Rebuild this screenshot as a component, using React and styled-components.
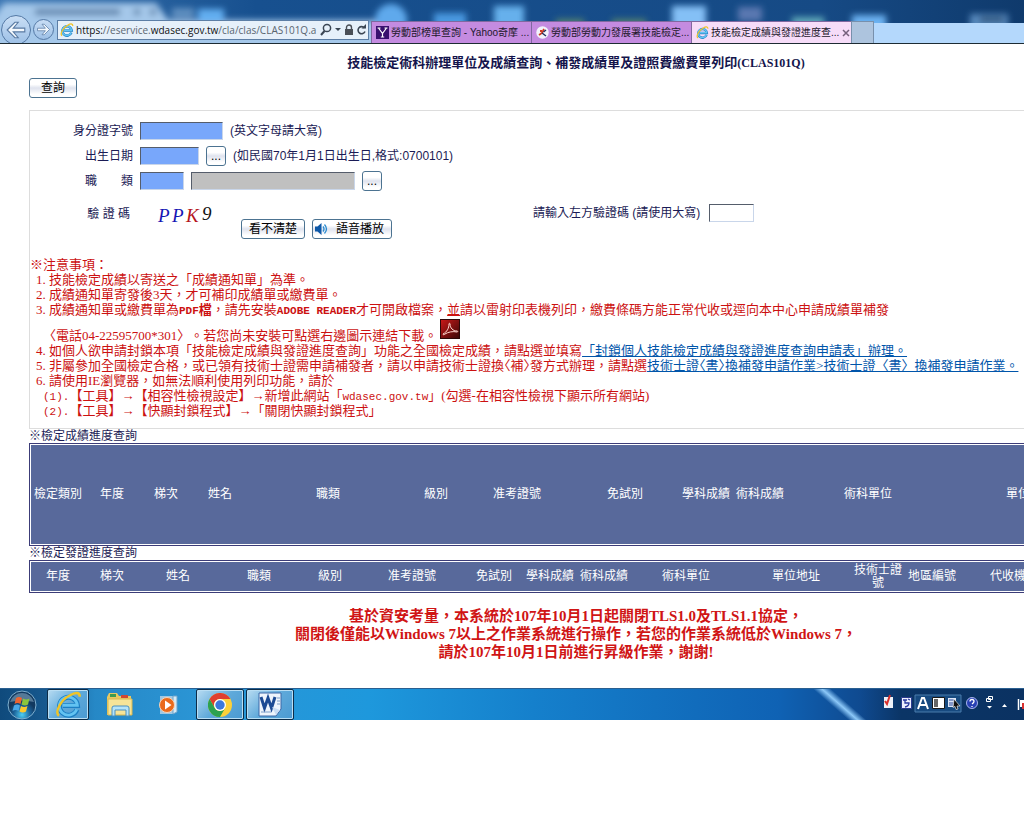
import React from 'react';
import styled, { createGlobalStyle } from 'styled-components';

const GlobalStyle = createGlobalStyle`
  * {
    box-sizing: border-box;
  }
  body {
    margin: 0;
    background: #fff;
    color: #1b1b55;
    font: 12px/14px "Liberation Sans", "Noto Sans CJK TC", sans-serif;
  }
`;

const Screen = styled.div`
  overflow: hidden;
`;

/* browser chrome */

const BrowserBar = styled.header`
  position: relative;
  display: flex;
  align-items: flex-end;
  height: 44px;
  background: #17508f;
  border-bottom: 1px solid #1d2b33;
  overflow: hidden;
`;

const Backdrop = styled.svg`
  position: absolute;
  top: 0;
  left: 0;
  width: 100%;
  height: 43px;
`;

const NavArea = styled.div`
  position: relative;
  display: flex;
  align-items: center;
  flex: none;
  width: 371px;
  height: 27px;
`;

const NavButton = styled.button`
  flex: none;
  width: ${(p) => p.$size}px;
  height: ${(p) => p.$size}px;
  margin: 0 ${(p) => p.$gap}px 0 1px;
  padding: 0;
  border: 1px solid #5579a5;
  border-radius: 50%;
  background: linear-gradient(#c9def5, #9dc0e6);
  line-height: 0;
`;

const AddressBar = styled.div`
  display: flex;
  align-items: center;
  flex: 1;
  gap: 2px;
  min-width: 0;
  height: 20px;
  margin-right: 2px;
  padding: 0 1px 0 2px;
  border: 1px solid #5c7ea6;
  background: #e6f0fa;
  font: 10px/16px "Open Sans", "Noto Sans", sans-serif;
  color: #5a6570;
  svg {
    flex: none;
  }
`;

const Url = styled.span`
  flex: 1;
  min-width: 0;
  white-space: nowrap;
  b {
    color: #111;
    font-weight: 400;
  }
`;

const Tab = styled.a`
  position: relative;
  display: flex;
  align-items: center;
  flex: none;
  gap: 2px;
  width: 160px;
  height: 22px;
  padding: 0 1px 0 4px;
  border: 1px solid #8068a0;
  border-width: 1px 0 0 1px;
  background: ${(p) => (p.$active ? '#f6dcf8' : '#c48be0')};
  color: #22182c;
  font: 10px/14px "Liberation Sans", "Noto Sans CJK TC", sans-serif;
  text-decoration: none;
  white-space: nowrap;
  svg {
    flex: none;
  }
`;

const TabText = styled.span`
  flex: 1;
  min-width: 0;
`;

const NewTab = styled.button`
  position: relative;
  width: 23px;
  height: 22px;
  padding: 0;
  border: 1px solid #7890ac;
  border-bottom: 0;
  background: #adc4de;
`;

/* page */

const Page = styled.main`
  min-width: 1094px;
  margin-left: 29px;
`;

const Title = styled.h1`
  margin: 0;
  padding: 10px 0 6px;
  font: bold 13px/18px "Liberation Serif", "Noto Sans CJK TC", sans-serif;
  color: #14144c;
  text-align: center;
`;

const TitleCode = styled.span`
  font-size: 12px;
`;

const PushButton = styled.button`
  display: inline-flex;
  align-items: center;
  justify-content: center;
  gap: 2px;
  height: 20px;
  padding: 0 ${(p) => p.$pad}px;
  border: 1px solid #4c7391;
  border-radius: 3px;
  background: linear-gradient(#fff 30%, #dfe3ee 50%, #fff 85%);
  color: #000;
  font: 12px/16px "Liberation Sans", "Noto Sans CJK TC", sans-serif;
`;

const QueryForm = styled.form`
  margin-top: 12px;
  padding-top: 7px;
  border: 1px solid #ddd;
`;

const FieldRow = styled.div`
  display: flex;
  align-items: center;
  gap: 7px;
  height: 25px;
`;

const FieldLabel = styled.label`
  width: 103px;
  text-align: right;
  white-space: pre;
`;

const TextBox = styled.input`
  width: ${(p) => p.$width}px;
  height: 18px;
  padding: 0 2px;
  border: 1px solid;
  border-color: #555d6b #c9d6ea #c9d6ea #555d6b;
  background: ${(p) => p.$fill || '#78a7fb'};
`;

const CaptchaRow = styled(FieldRow)`
  align-items: flex-start;
  height: 64px;
  padding-top: 11px;
`;

const CaptchaLabel = styled(FieldLabel)`
  width: 100px;
  padding-top: 3px;
`;

const Captcha = styled.svg`
  width: 60px;
  height: 22px;
  margin: 0 17px 0 20px;
  font: italic 19px "Liberation Serif", serif;
`;

const ButtonGroup = styled.div`
  display: flex;
  gap: 7px;
  margin-top: 15px;
`;

const CaptchaEntry = styled.div`
  display: flex;
  align-items: center;
  gap: 9px;
  margin-left: 134px;
`;

const Notes = styled.section`
  padding-bottom: 10px;
  color: #cc1111;
  font: 13px/15px "Liberation Serif", "Noto Sans CJK TC", sans-serif;
  text-spacing-trim: space-all;
  white-space: nowrap;
`;

const NoteLine = styled.p`
  margin: 0 0 0 ${(p) => p.$indent || 0}px;
`;

const Marker = styled.span`
  display: inline-block;
  width: 13px;
`;

const IconLine = styled(NoteLine)`
  display: flex;
  align-items: flex-end;
  gap: 3px;
  height: 26px;
  a {
    height: 24px;
  }
`;

const Mono = styled.span`
  font-family: "Liberation Mono", monospace;
  font-size: 11px;
  line-height: 10px;
  white-space: pre;
`;

// half-width brackets
const Compact = styled.span`
  font-feature-settings: "halt";
`;

const DocLink = styled.a`
  color: #0055aa;
`;

const Caption = styled.h2`
  margin: 0;
  font: 12px/14px "Liberation Sans", "Noto Sans CJK TC", sans-serif;
`;

const ResultTable = styled.table`
  table-layout: fixed;
  width: ${(p) => p.$width}px;
  height: ${(p) => p.$height}px;
  padding: 1px;
  border: 1px solid #3c3c78;
  border-spacing: 0;
  th {
    padding: 0 3px;
    background: #58699b;
    color: #fff;
    font-weight: 400;
    line-height: 13px;
  }
`;

const Notice = styled.p`
  margin: 14px 0 27px;
  color: #d01515;
  font: bold 15px/18px "Liberation Serif", "Noto Sans CJK TC", sans-serif;
  text-align: center;
`;

/* windows taskbar */

const TaskBar = styled.footer`
  position: relative;
  display: flex;
  align-items: center;
  height: 32px;
  border-top: 1px solid #2a5f90;
  background: linear-gradient(90deg, #0f4a7c 0, #16588e 45px, #2688c6 95px, #2b96d6 20%, #1e98dc 36%, #1580cc 52%, #0f62b4 76%, #0f4a90 84%, #0b3566 88%, #0b3262);
  overflow: hidden;
`;

const Streak = styled.span`
  position: absolute;
  top: -20px;
  right: 173px;
  width: 12px;
  height: 80px;
  background: linear-gradient(90deg, #5fb0f000, #8cc8f8, #5fb0f000);
  transform: rotate(-49deg);
`;

const TaskButton = styled.button`
  display: flex;
  align-items: center;
  justify-content: center;
  width: ${(p) => p.$width}px;
  height: 31px;
  margin-right: ${(p) => p.$gap || 0}px;
  padding: 0;
  border: 1px solid ${(p) => (p.$open ? '#0c2c48' : 'transparent')};
  border-radius: 2px;
  background: ${(p) => (p.$open ? 'linear-gradient(135deg, #b8dcf2, #5fa9da 50%, #4a9ad2)' : 'none')};
  box-shadow: ${(p) => (p.$open ? 'inset 0 0 0 1px #b9def4' : 'none')};
`;

const Tray = styled.div`
  display: flex;
  align-items: center;
  margin-left: auto;
  padding-bottom: 3px;
`;

const IeIcon = ({ size }) => (
  <svg width={size} height={size} viewBox="0 0 24 24" fill="none">
    <path d="M19.5 16.5A8 8 0 1 1 20 12.8H7" stroke="#1c7fc4" strokeWidth="4.4" />
    <path d="M19.3 16.3A8 8 0 1 1 19.8 12.6H7" stroke="#63c3f2" strokeWidth="2.600" />
    <path d="M3.5 22C-.5 19 5 8 13 4c5-3 9-3.500 9 1" stroke="#f0c428" strokeWidth="2.200" />
  </svg>
);

const ArrowIcon = ({ size, flip }) => (
  <svg width={size} height={size} viewBox="0 0 20 20">
    <path
      d="M2 10l7-7h3L7.500 8.300H18v3.400H7.500L12 17H9z"
      transform={flip ? 'rotate(180 10 10)' : undefined}
      fill="#f3f8fd"
      stroke="#5a7ba3"
      strokeWidth="1"
    />
  </svg>
);

const SearchIcon = () => (
  <svg width="12" height="14" viewBox="0 0 12 14" fill="none" stroke="#3b4654" strokeWidth="1.500">
    <circle cx="7" cy="5" r="3.600" />
    <path d="M4.500 8L1 12" strokeWidth="2" />
  </svg>
);

const LockIcon = () => (
  <svg width="10" height="12" viewBox="0 0 10 12">
    <rect x="1" y="5" width="8" height="6" fill="#4a4f57" />
    <path d="M2.500 5V3.500a2.500 2.500 0 0 1 5 0V5" fill="none" stroke="#4a4f57" strokeWidth="1.400" />
  </svg>
);

const ReloadIcon = () => (
  <svg width="11" height="12" viewBox="0 0 11 12">
    <path d="M8.500 4A3.600 3.600 0 1 0 9 7.500" fill="none" stroke="#3b4654" strokeWidth="1.600" />
    <path d="M5.500 4.500H10V0z" fill="#3b4654" />
  </svg>
);

const YahooIcon = () => (
  <svg width="13" height="13" viewBox="0 0 13 13">
    <rect width="13" height="13" fill="#38106e" />
    <path d="M2.500 2l4 5.500L10.500 2M6.500 7v4M4.800 11h3.400M1.500 2h3M8.500 2h3" fill="none" stroke="#fff" strokeWidth="1.200" />
  </svg>
);

const AgencyIcon = () => (
  <svg width="13" height="13" viewBox="0 0 13 13">
    <circle cx="6.500" cy="6.500" r="6.200" fill="#f2f2fa" />
    <path d="M3 9l3-2 2-4M4 5h2" fill="none" stroke="#d03a20" strokeWidth="1.800" />
    <path d="M6 7l4 3M7.500 6L10 4" stroke="#23305e" strokeWidth="1.500" />
  </svg>
);

const SpeakerIcon = () => (
  <svg width="14" height="14" viewBox="0 0 14 14">
    <path d="M1 4.500h2.500L7.500 1v12L3.500 9.500H1z" fill="#0d58a8" />
    <path d="M9 4.500q2 2.500 0 5M10.500 2.500q4 4.500 0 9" fill="none" stroke="#2a8bd0" strokeWidth="1.300" />
  </svg>
);

const PdfIcon = () => (
  <svg width="20" height="20" viewBox="0 0 20 20">
    <defs>
      <linearGradient id="pdf" x2="1" y2="1">
        <stop offset="0" stopColor="#c81818" />
        <stop offset="1" stopColor="#3c0808" />
      </linearGradient>
    </defs>
    <rect width="20" height="20" fill="#2c0808" />
    <rect x="1" y="1" width="18" height="18" fill="url(#pdf)" />
    <path d="M3 15c4-2 6-6 6-10 0-1 1-1 1 0 0 4 3 7 7 7 1 0 1 1 0 1-4-1-9 0-12 2-1 1-2 1-2 0z" fill="none" stroke="#ffd8d0" />
  </svg>
);

const StartIcon = () => (
  <svg width="30" height="30" viewBox="0 0 30 30">
    <defs>
      <radialGradient id="orb" cy=".85">
        <stop offset="0" stopColor="#4ed0f4" />
        <stop offset=".6" stopColor="#1a6098" />
        <stop offset="1" stopColor="#12395f" />
      </radialGradient>
    </defs>
    <circle cx="15" cy="15" r="14" fill="url(#orb)" stroke="#7fb0d0" />
    <path d="M3 12a12.500 12.500 0 0 1 24 0q-12-3-24 0z" fill="#a8c8dc" opacity=".45" />
    <path d="M9 8q3-2 6 0l-1.500 6q-3-2-6 0z" fill="#ee6430" />
    <path d="M16 8.500q3 2 6.500 0L21 14.500q-3 2-6.500 0z" fill="#8cc63c" />
    <path d="M7 15.500q3-2 6 0L11.500 21q-3-2-6 0z" fill="#4aa8e8" />
    <path d="M14 16q3 2 6.500 0L19 21.500q-3 2-6.500 0z" fill="#fcc82c" />
  </svg>
);

const FolderIcon = () => (
  <svg width="28" height="26" viewBox="0 0 28 26">
    <path d="M1 5l2-4h8l2 3h12v19H1z" fill="#e8c860" />
    <path d="M4 2h6v3H4z" fill="#3c9a50" />
    <path d="M15 3h7v3h-7z" fill="#d04830" />
    <path d="M2 7h24v16H2z" fill="#f6e498" stroke="#d8b850" />
    <path d="M6 24v-8q0-2 2-2h13q2 0 2 2v8h-3v-6H9v6z" fill="#b4e4fa" stroke="#4a90c0" />
  </svg>
);

const MediaIcon = () => (
  <svg width="24" height="20" viewBox="0 0 24 20">
    <path d="M2 1h13v18H2z" fill="#9fc8e4" />
    <path d="M15 1h4v16l-4 2z" fill="#d6eaf6" stroke="#6ba4cc" />
    <circle cx="9" cy="10" r="7.500" fill="#ea6a1c" stroke="#f8d4b8" />
    <path d="M7 5.500l6.500 4.500L7 14.500z" fill="#fff" />
  </svg>
);

const ChromeIcon = () => (
  <svg width="24" height="24" viewBox="0 0 24 24">
    <circle cx="12" cy="12" r="12" fill="#fcd03a" />
    <path d="M1.600 6A12 12 0 0 1 22.400 6H12a6 6 0 0 0-5.200 9z" fill="#df3e30" />
    <path d="M1.600 6A12 12 0 0 0 12 24l5.200-9A6 6 0 0 1 6.800 15z" fill="#2da150" />
    <circle cx="12" cy="12" r="6" fill="#fff" />
    <circle cx="12" cy="12" r="4.700" fill="#3c78dc" />
  </svg>
);

const WordIcon = () => (
  <svg width="26" height="25" viewBox="0 0 26 25">
    <path d="M2 1h22v16l-5 7H2z" fill="#eef4fc" stroke="#3c68a8" />
    <path d="M4 5l3.500 11L11 6l3.500 10L18 5" fill="none" stroke="#1c4a94" strokeWidth="3" />
    <path d="M4 20h10M20 6h3M20 9h3M20 12h3" stroke="#7a9cc8" />
    <path d="M15 15l8 3-4 5z" fill="#c8dcf4" />
  </svg>
);

const TrayIcons = () => (
  <svg width="141" height="22" viewBox="0 0 141 22" fill="none">
    <path d="M1 5h9v11H1z" fill="#eef2f8" />
    <path d="M2 9l2 3 3-9" stroke="#d8302c" strokeWidth="2" />
    <path d="M18.500 5.500h10v11h-10z" fill="#eef0ff" stroke="#2c3c90" />
    <path d="M20 8h4M22 8v3h4q0 3-4 4M25 7l2 1" stroke="#2838a0" strokeWidth="1.300" />
    <path d="M32 3h46v17H32z" fill="#174a80" stroke="#4a7cac" />
    <path d="M35 17l4-11h2l4 11M37 13h6" stroke="#fff" strokeWidth="2" />
    <path d="M49.500 5.500h12v11h-12z" fill="#fff" stroke="#181818" />
    <path d="M51 7h4v8h-4z" fill="#666" />
    <path d="M65 6h8v9h-8z" fill="#dce6f8" />
    <path d="M66 8h5M66 11h6M66 13h4" stroke="#2c4898" />
    <path d="M71 7l6 7h-3l1 3-2 .5-1-3-2 1z" fill="#111" stroke="#fff" strokeWidth=".6" />
    <circle cx="89" cy="11" r="5.500" fill="#2840b4" stroke="#a8b4ec" />
    <path d="M87 9.500q0-2 2-2t2 2q0 1-2 2.500M89 14v1" stroke="#fff" strokeWidth="1.300" />
    <path d="M105.500 4.500h4v3h-4zM103.500 6.500h4v3h-4z" stroke="#fff" />
    <path d="M104 14h5l-2.500 2.500zM119 15h5l-2.500-3z" fill="#fff" />
    <path d="M135.500 7v11" stroke="#fff" strokeWidth="1.500" />
    <path d="M137 8h4v7h-4z" fill="#fff" />
    <path d="M139 11h2v6h-2z" fill="#d83030" />
  </svg>
);

// blurred desktop showing through the glass title bar
const GlassBackdrop = () => (
  <Backdrop viewBox="0 0 1024 43" preserveAspectRatio="none" aria-hidden="true">
    <defs>
      <filter id="soft" x="-20%" y="-60%" width="140%" height="220%">
        <feGaussianBlur stdDeviation="3" />
      </filter>
      <linearGradient id="sky">
        <stop offset="0" stopColor="#3d77b3" />
        <stop offset=".25" stopColor="#17508f" />
        <stop offset=".8" stopColor="#164a85" />
        <stop offset="1" stopColor="#0f3a6c" />
      </linearGradient>
    </defs>
    <rect width="1024" height="43" fill="url(#sky)" />
    <g filter="url(#soft)">
      <path d="M-10 22L4 3h152l12 17h210v30H-10z" fill="#a5c8ea" />
      <path d="M35 9h85v6H35zM134 9h6v6h-6zM150 9h6v6h-6z" fill="#587fa8" />
      <path d="M172 8h22v10h-22z" fill="#5f8fc0" />
      <rect x="198" y="9" width="26" height="14" fill="#62aef0" />
      <circle cx="391" cy="20" r="16" fill="#5ea9ec" />
      <rect x="434" y="13" width="32" height="20" fill="#4a98e0" />
      <rect x="494" y="6" width="30" height="26" fill="#66b0ec" />
      <path d="M556 19h28v10h-28zM612 19h34v10h-34z" fill="#52806f" />
      <rect x="672" y="6" width="34" height="24" fill="#84c0f6" />
      <rect x="738" y="7" width="24" height="14" fill="#5a78b0" />
      <rect x="792" y="17" width="32" height="10" fill="#5fa8b8" />
      <rect x="852" y="15" width="34" height="20" fill="#6cb2f2" />
      <rect x="970" y="14" width="38" height="20" fill="#5688bc" />
      <rect x="980" y="17" width="24" height="5" fill="#2c4c70" />
    </g>
    <rect x="850" y="23" width="174" height="20" fill="#b4d8fc" />
  </Backdrop>
);

const progressColumns = [
  ['檢定類別', 54], ['年度', 54], ['梯次', 54], ['姓名', 54], ['職類', 162], ['級別', 54],
  ['准考證號', 108], ['免試別', 108], ['學科成績', 54], ['術科成績', 54], ['術科單位', 162], ['單位地址', 162],
];

const licenseColumns = [
  ['年度', 54], ['梯次', 54], ['姓名', 78], ['職類', 84], ['級別', 58], ['准考證號', 106], ['免試別', 58],
  ['學科成績', 54], ['術科成績', 54], ['術科單位', 110], ['單位地址', 110], ['技術士證號', 54],
  ['地區編號', 54], ['代收機構', 110],
];

const HeaderTable = ({ columns, height, label }) => (
  <ResultTable
    $width={columns.reduce((sum, col) => sum + col[1], 4)}
    $height={height}
    aria-label={label}
  >
    <colgroup>
      {columns.map(([name, width]) => (
        <col key={name} style={{ width }} />
      ))}
    </colgroup>
    <thead>
      <tr>
        {columns.map(([name]) => (
          <th key={name} scope="col">{name}</th>
        ))}
      </tr>
    </thead>
  </ResultTable>
);

const App = () => {
  const handleSubmit = (e) => e.preventDefault();

  return (
    <Screen>
      <GlobalStyle />
      <BrowserBar>
        <GlassBackdrop />
        <NavArea>
          <NavButton $size={30} $gap={1} aria-label="Back"><ArrowIcon size={22} /></NavButton>
          <NavButton $size={21} $gap={3} aria-label="Forward"><ArrowIcon size={15} flip /></NavButton>
          <AddressBar>
            <IeIcon size={14} />
            <Url><b>https:</b>//eservice.<b>wdasec.gov.tw</b>/cla/clas/CLAS101Q.a</Url>
            <SearchIcon />
            <svg width="8" height="4" viewBox="0 0 8 4"><path d="M1 0h6L4 3z" fill="#3b4654" /></svg>
            <LockIcon />
            <ReloadIcon />
          </AddressBar>
        </NavArea>
        <Tab href="#yahoo">
          <YahooIcon />
          <TabText>勞動部榜單查詢 - Yahoo奇摩 ...</TabText>
        </Tab>
        <Tab href="#agency">
          <AgencyIcon />
          <TabText>勞動部勞動力發展署技能檢定...</TabText>
        </Tab>
        <Tab href="#query" $active>
          <IeIcon size={13} />
          <TabText>技能檢定成績與發證進度查...</TabText>
          <svg width="8" height="8" viewBox="0 0 8 8"><path d="M1 1l6 6M7 1L1 7" stroke="#75607c" strokeWidth="1.500" /></svg>
        </Tab>
        <NewTab aria-label="New tab" />
      </BrowserBar>

      <Page>
        <Title>技能檢定術科辦理單位及成績查詢、補發成績單及證照費繳費單列印<TitleCode>(CLAS101Q)</TitleCode></Title>
        <PushButton $pad={11} type="submit" form="query">查詢</PushButton>

        <QueryForm id="query" onSubmit={handleSubmit}>
          <FieldRow>
            <FieldLabel htmlFor="idno">身分證字號</FieldLabel>
            <TextBox id="idno" $width={83} />
            <span>(英文字母請大寫)</span>
          </FieldRow>
          <FieldRow>
            <FieldLabel htmlFor="birth">出生日期</FieldLabel>
            <TextBox id="birth" $width={59} />
            <PushButton $pad={4} type="button" aria-label="選擇日期">...</PushButton>
            <span>(如民國70年1月1日出生日,格式:0700101)</span>
          </FieldRow>
          <FieldRow>
            <FieldLabel htmlFor="job">職　　類</FieldLabel>
            <TextBox id="job" $width={44} />
            <TextBox $width={164} $fill="#c0c0c0" readOnly aria-label="職類名稱" />
            <PushButton $pad={4} type="button" aria-label="選擇職類">...</PushButton>
          </FieldRow>
          <CaptchaRow>
            <CaptchaLabel as="span">驗 證 碼</CaptchaLabel>
            <Captcha viewBox="0 0 60 22">
              <text x="1" y="18" fill="#1414b4">P</text>
              <text x="15" y="18" fill="#1414b4">P</text>
              <text x="29" y="18" fill="#b41420">K</text>
              <text x="45" y="16" fill="#111">9</text>
            </Captcha>
            <ButtonGroup>
              <PushButton $pad={7} type="button">看不清楚</PushButton>
              <PushButton $pad={1} type="button"><SpeakerIcon />語音播放　</PushButton>
            </ButtonGroup>
            <CaptchaEntry>
              <label htmlFor="code">請輸入左方驗證碼 (請使用大寫)</label>
              <TextBox id="code" $width={45} $fill="#fff" />
            </CaptchaEntry>
          </CaptchaRow>

          <Notes>
            <NoteLine>※注意事項：</NoteLine>
            <NoteLine $indent={6}><Marker>1.</Marker>技能檢定成績以寄送之「成績通知單」為準。</NoteLine>
            <NoteLine $indent={6}><Marker>2.</Marker>成績通知單寄發後3天，才可補印成績單或繳費單。</NoteLine>
            <NoteLine $indent={6}>
              <Marker>3.</Marker>成績通知單或繳費單為<b><Mono>PDF</Mono>檔</b>，請先安裝<b><Mono>ADOBE READER</Mono></b>才可開啟檔案，<u>並</u>請以雷射印表機列印，繳費條碼方能正常代收或逕向本中心申請成績單補發
            </NoteLine>
            <IconLine $indent={13}>
              <span>〈電話04-22595700*301〉。若您尚未安裝可點選右邊圖示連結下載。</span>
              <a href="#reader" aria-label="Adobe Reader"><PdfIcon /></a>
            </IconLine>
            <NoteLine $indent={6}>
              <Marker>4.</Marker>如個人欲申請封鎖本項「技能檢定成績與發證進度查詢」功能之全國檢定成績，請點選並填寫<DocLink href="#block">「封鎖個人技能檢定成績與發證進度查詢申請表」辦理。</DocLink>
            </NoteLine>
            <NoteLine $indent={6}>
              <Marker>5.</Marker>非屬參加全國檢定合格，或已領有技術士證需申請補發者，請以申請技術士證換<Compact>〈補〉</Compact>發方式辦理，請點選<DocLink href="#reissue">技術士證<Compact>〈書〉</Compact>換補發申請作業&gt;技術士證〈書〉換補發申請作業。</DocLink>
            </NoteLine>
            <NoteLine $indent={6}><Marker>6.</Marker>請使用IE瀏覽器，如無法順利使用列印功能，請於</NoteLine>
            <NoteLine $indent={13}><Mono>(1).</Mono>【工具】→【相容性檢視設定】→新增此網站「<Mono>wdasec.gov.tw</Mono>」(勾選-在相容性檢視下顯示所有網站)</NoteLine>
            <NoteLine $indent={13}><Mono>(2).</Mono>【工具】→【快顯封鎖程式】→「關閉快顯封鎖程式」</NoteLine>
          </Notes>
        </QueryForm>

        <Caption>※檢定成績進度查詢</Caption>
        <HeaderTable columns={progressColumns} height={103} label="檢定成績進度查詢" />
        <Caption>※檢定發證進度查詢</Caption>
        <HeaderTable columns={licenseColumns} height={33} label="檢定發證進度查詢" />

        <Notice>
          基於資安考量，本系統於107年10月1日起關閉TLS1.0及TLS1.1協定，<br />
          關閉後僅能以Windows 7以上之作業系統進行操作，若您的作業系統低於Windows 7，<br />
          請於107年10月1日前進行昇級作業，謝謝!
        </Notice>
      </Page>

      <TaskBar>
        <Streak />
        <TaskButton $width={44} $gap={3} aria-label="Start"><StartIcon /></TaskButton>
        <TaskButton $width={42} $gap={8} $open aria-label="Internet Explorer"><IeIcon size={27} /></TaskButton>
        <TaskButton $width={46} $gap={2} aria-label="Explorer"><FolderIcon /></TaskButton>
        <TaskButton $width={50} $gap={1} aria-label="Media Player"><MediaIcon /></TaskButton>
        <TaskButton $width={48} $gap={2} $open aria-label="Chrome"><ChromeIcon /></TaskButton>
        <TaskButton $width={48} $open aria-label="Word"><WordIcon /></TaskButton>
        <Tray><TrayIcons /></Tray>
      </TaskBar>
    </Screen>
  );
};

export default App;
